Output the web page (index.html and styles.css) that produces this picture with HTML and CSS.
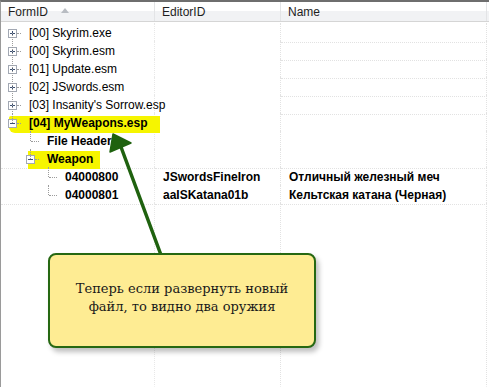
FILE: index.html
```html
<!DOCTYPE html>
<html lang="en">
<head>
    <meta charset="UTF-8">
    <title>TES5Edit - MyWeapons.esp</title>
    <link rel="stylesheet" href="styles.css">
</head>
<body>
    <div class="window">
        <div class="header">
            <div class="hcell">FormID <span class="sort"></span></div>
            <div class="hcell">EditorID</div>
            <div class="hcell">Name</div>
        </div>

        <div class="tree">
            <div class="row">
                <div class="cell c1"><span class="node first plus"></span><span class="label">[00] Skyrim.exe</span></div>
                <div class="cell c2"></div>
                <div class="cell c3 line"></div>
            </div>
            <div class="row">
                <div class="cell c1"><span class="node plus"></span><span class="label">[00] Skyrim.esm</span></div>
                <div class="cell c2"></div>
                <div class="cell c3 line"></div>
            </div>
            <div class="row">
                <div class="cell c1"><span class="node plus"></span><span class="label">[01] Update.esm</span></div>
                <div class="cell c2"></div>
                <div class="cell c3 line"></div>
            </div>
            <div class="row">
                <div class="cell c1"><span class="node plus"></span><span class="label">[02] JSwords.esm</span></div>
                <div class="cell c2"></div>
                <div class="cell c3 line"></div>
            </div>
            <div class="row">
                <div class="cell c1"><span class="node plus"></span><span class="label">[03] Insanity's Sorrow.esp</span></div>
                <div class="cell c2"></div>
                <div class="cell c3 line"></div>
            </div>
            <div class="row">
                <div class="cell c1"><span class="node last minus"></span><span class="label bold mark mark-file">[04] MyWeapons.esp</span></div>
                <div class="cell c2"></div>
                <div class="cell c3"></div>
            </div>
            <div class="row">
                <div class="cell c1"><span class="guide"></span><span class="node top"></span><span class="label bold">File Header</span></div>
                <div class="cell c2"></div>
                <div class="cell c3"></div>
            </div>
            <div class="row">
                <div class="cell c1 line"><span class="guide"></span><span class="node last minus"></span><span class="label bold mark mark-group">Weapon</span></div>
                <div class="cell c2 line"></div>
                <div class="cell c3 line"></div>
            </div>
            <div class="row">
                <div class="cell c1"><span class="guide"></span><span class="guide"></span><span class="node top"></span><span class="label bold">04000800</span></div>
                <div class="cell c2 bold">JSwordsFineIron</div>
                <div class="cell c3 bold">Отличный железный меч</div>
            </div>
            <div class="row">
                <div class="cell c1 line"><span class="guide"></span><span class="guide"></span><span class="node last"></span><span class="label bold">04000801</span></div>
                <div class="cell c2 line bold">aaISKatana01b</div>
                <div class="cell c3 line bold">Кельтская катана (Черная)</div>
            </div>
            <div class="row filler">
                <div class="cell c1"></div>
                <div class="cell c2"></div>
                <div class="cell c3"></div>
            </div>
        </div>

        <!-- annotation drawn over the tree -->
        <svg class="arrow" width="489" height="387" viewBox="0 0 489 387">
            <line x1="161" y1="255" x2="121" y2="147" stroke="#1f620f" stroke-width="3.5" stroke-linecap="round"/>
            <polygon points="113,134 131,143 110,152" fill="#1f620f" stroke="#1f620f" stroke-width="1.5" stroke-linejoin="round"/>
        </svg>

        <div class="callout">
            Теперь если развернуть новый<br>файл, то видно два оружия
        </div>
    </div>
</body>
</html>
```

FILE: styles.css
```css
body {
    margin: 0;
    background-color: #fff;
    font-family: "Liberation Sans", Arial, sans-serif;
    font-size: 12px;
    color: #000;
}

.window {
    position: relative;
    width: 488px;
    height: 385px;
    border-top: 2px solid #6e6e6e;
    border-left: 1px solid #9a9a9a;
    display: flex;
    flex-direction: column;
    overflow: hidden;
}

.header {
    display: grid;
    grid-template-columns: 154px 126px 206px;
    height: 19px;
    background: linear-gradient(#ffffff, #ffffff 45%, #f1f2f4 46%, #f1f2f4);
    border-bottom: 1px solid #d5d5d5;
}

.hcell {
    display: flex;
    align-items: center;
    padding-left: 7px;
    font-size: 12px;
    color: #1e1e1e;
    border-right: 1px solid #e3e4e6;
}

.sort {
    display: inline-block;
    margin-left: 13px;
    margin-top: -2px;
    width: 0;
    height: 0;
    border-left: 4px solid transparent;
    border-right: 4px solid transparent;
    border-bottom: 5px solid #b8bcc2;
}

.tree {
    flex: 1;
    display: flex;
    flex-direction: column;
    padding-top: 1px;
}

.row {
    display: grid;
    grid-template-columns: 154px 126px 206px;
    height: 18px;
}

.row.filler {
    flex: 1;
}

.cell {
    display: flex;
    align-items: center;
    padding-top: 1px;
    white-space: nowrap;
    border-right: 1px dotted #e2e2e2;
    border-bottom: 1px solid transparent;
    box-sizing: border-box;
}

.cell.line {
    border-bottom: 1px dotted #e2e2e2;
}

.c1 {
    padding-left: 2px;
    border-right: 1px dotted #e8e8e8;
}

.c2,
.c3 {
    padding-left: 8px;
}

.bold {
    font-weight: bold;
}

.label {
    padding-left: 8px;
}

/* tree lines */
.guide,
.node {
    position: relative;
    flex: none;
    width: 18px;
    height: 18px;
}

.node::before {
    content: "";
    position: absolute;
    left: 9px;
    top: -1px;
    height: 19px;
    border-left: 1px dotted #9c9c9c;
}

.node.first::before {
    top: 9px;
    height: 9px;
}

.node.last::before,
.node.top::before {
    height: 10px;
}

.node::after {
    content: "";
    position: absolute;
    left: 10px;
    top: 9px;
    width: 8px;
    border-top: 1px dotted #9c9c9c;
}

/* expander boxes: frame, white fill, and a plus or minus sign */
.node.plus,
.node.minus {
    z-index: 1;
    background-image:
        linear-gradient(#3a4f72, #3a4f72),
        linear-gradient(#3a4f72, #3a4f72),
        linear-gradient(#fff, #fff),
        linear-gradient(#a2a8b3, #a2a8b3);
    background-size: 5px 1px, 1px 5px, 7px 7px, 9px 9px;
    background-position: 7px 9px, 9px 7px, 6px 6px, 5px 5px;
    background-repeat: no-repeat;
}

.node.minus {
    background-size: 5px 1px, 0 0, 7px 7px, 9px 9px;
}

.node.plus::before,
.node.minus::before {
    z-index: -1;
}

.node.plus::after,
.node.minus::after {
    left: 14px;
    width: 4px;
}

/* highlighter marks */
.mark {
    position: relative;
    z-index: 0;
}

.mark::before {
    content: "";
    position: absolute;
    z-index: -1;
    background-color: #f6f500;
}

.mark-file::before {
    left: -12px;
    right: -13px;
    top: 0;
    bottom: -3px;
    border-radius: 2px 0 0 6px;
}

.mark-group::before {
    left: -11px;
    right: -7px;
    top: -1px;
    bottom: -3px;
}

.arrow {
    position: absolute;
    left: -1px;
    top: -2px;
    z-index: 2;
    pointer-events: none;
}

.callout {
    position: absolute;
    left: 47px;
    top: 251px;
    z-index: 3;
    width: 268px;
    height: 95px;
    box-sizing: border-box;
    padding-bottom: 6px;
    display: flex;
    align-items: center;
    justify-content: center;
    text-align: center;
    background-color: #feec93;
    border: 2px solid #266812;
    border-radius: 8px;
    box-shadow: 3px 4px 5px rgba(0, 0, 0, 0.25);
    font-family: "DejaVu Serif", "Liberation Serif", serif;
    font-size: 13px;
    line-height: 18px;
    color: #1a1a1a;
}
```
